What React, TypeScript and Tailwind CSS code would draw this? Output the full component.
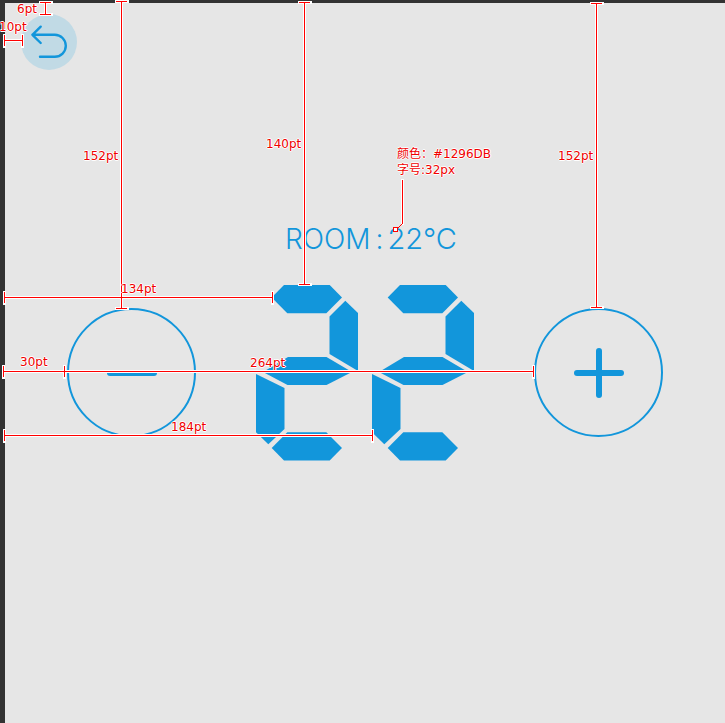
type Point = [number, number];

const SEGMENTS = [
  '28,0 73.7,0 86,12.5 70.3,28.3 31.3,28.3 15.7,12.5',
  '89.3,15.7 102,28 102,86 73.5,69 73.5,31.5',
  '32,72 70.5,72 96,87 70.5,100 31.5,100 7,87',
  '0,89 28.5,103 28.5,144 12.3,159.3 0,147.3',
  '31.3,147.3 70.3,147.3 86,163 73.7,175.5 28,175.5 15.7,163',
];

function DigitTwo() {
  return (
    <svg className="h-[175px] w-[102px] overflow-visible fill-[#1296db]" viewBox="0 0 102 175" aria-hidden="true">
      {SEGMENTS.map((points) => (
        <polygon key={points} points={points} />
      ))}
    </svg>
  );
}

function RoundButton({ label, plus }: { label: string; plus?: boolean }) {
  return (
    <button
      type="button"
      aria-label={label}
      className="flex size-[129px] shrink-0 items-center justify-center rounded-full border-2 border-[#1296db]"
    >
      <svg
        className="size-[50px] stroke-[#1296db]"
        viewBox="0 0 50 50"
        strokeWidth="6"
        strokeLinecap="round"
        aria-hidden="true"
      >
        <path d="M3 25H47" />
        {plus && <path d="M25 3V47" />}
      </svg>
    </button>
  );
}

// Each measure runs between two points and carries an end cap at both.
const MEASURES: [Point, Point][] = [
  [[121, 1], [121, 308]],
  [[304, 2], [304, 284]],
  [[596, 3], [596, 307]],
  [[45, 2], [45, 14]],
  [[4, 40], [22, 40]],
  [[4, 297], [272, 297]],
  [[3, 371], [533, 371]],
  [[4, 435], [372, 435]],
];

function measurePath([[x1, y1], [x2, y2]]: [Point, Point]) {
  return x1 === x2
    ? `M${x1 - 5.5} ${y1}h11M${x1 - 5.5} ${y2}h11M${x1} ${y1}V${y2}`
    : `M${x1} ${y1 - 5.5}v11M${x2} ${y1 - 5.5}v11M${x1} ${y1}H${x2}`;
}

const LINES = MEASURES.map(measurePath).join('') + 'M64 365.5v11M402 179.5V223';

const NOTES = [
  { text: '6pt', place: 'left-[17px] top-[1px]' },
  { text: '10pt', place: 'left-[-1px] top-[19px]' },
  { text: '152pt', place: 'left-[83px] top-[148px]' },
  { text: '140pt', place: 'left-[266px] top-[136px]' },
  { text: '152pt', place: 'left-[558px] top-[148px]' },
  { text: '134pt', place: 'left-[121px] top-[281px]' },
  { text: '30pt', place: 'left-[20px] top-[354px]' },
  { text: '264pt', place: 'left-[250px] top-[355px]' },
  { text: '184pt', place: 'left-[171px] top-[419px]' },
  { text: '颜色：#1296DB\n字号:32px', place: 'left-[397px] top-[146px]' },
];

function Annotations() {
  return (
    <div className="pointer-events-none absolute inset-0 overflow-hidden">
      <svg className="absolute inset-0 size-full" fill="none">
        <path
          d={LINES}
          transform="translate(0.5 0.5)"
          className="stroke-white"
          strokeWidth="3"
          strokeLinecap="square"
          shapeRendering="crispEdges"
        />
        <path
          d={LINES}
          transform="translate(0.5 0.5)"
          className="stroke-[#ff0000]"
          strokeWidth="1"
          shapeRendering="crispEdges"
        />
        <path d="M402.5 223.5L397.5 228.5" className="stroke-[#ff0000]" strokeWidth="1" />
        <rect
          x="393.5"
          y="227.5"
          width="4"
          height="4"
          className="fill-white stroke-[#ff0000]"
          shapeRendering="crispEdges"
        />
      </svg>
      {NOTES.map(({ text, place }) => (
        <p
          key={place}
          className={`absolute whitespace-pre font-['DejaVu_Sans','Noto_Sans_CJK_SC',sans-serif] text-[12px] leading-[16px] text-[#f00000] [text-shadow:1px_0_#fff,-1px_0_#fff,0_1px_#fff,0_-1px_#fff] ${place}`}
        >
          {text}
        </p>
      ))}
    </div>
  );
}

export default function App() {
  return (
    <div className="relative min-h-screen border-l-[5px] border-t-[3px] border-[#333333] bg-[#e6e6e6]">
      <main>
        <header className="pl-[16px] pt-[11px]">
          <button
            type="button"
            aria-label="Back"
            className="flex size-[56px] items-center justify-center rounded-full bg-[#c1dae5]"
          >
            <svg
              className="size-[40px] stroke-[#1296db]"
              viewBox="0 0 40 40"
              fill="none"
              strokeWidth="2.4"
              strokeLinecap="round"
              strokeLinejoin="round"
              aria-hidden="true"
            >
              <path d="M11.7 4.7L3.4 12.8L11.7 21M3.4 12.8H25.8A11 11 0 0 1 25.8 34.8H11" />
            </svg>
          </button>
        </header>

        <p className="mt-[153px] flex h-[32px] items-center justify-center pl-[12px] font-[Inter,sans-serif] font-light text-[#1296db]">
          <span className="text-[28px] leading-[32px]">ROOM</span>
          <span className="ml-[5px] text-[28px] leading-[32px]">:</span>
          <span className="ml-[4px] text-[29px] leading-[32px]">22°C</span>
        </p>

        <section className="mt-[30px] flex items-center justify-between px-[62px]">
          <RoundButton label="Lower the temperature" />
          <div role="img" aria-label="22" className="flex gap-[14px]">
            <DigitTwo />
            <DigitTwo />
          </div>
          <RoundButton label="Raise the temperature" plus />
        </section>
      </main>
      <div className="pointer-events-none absolute -left-[5px] -top-[3px] bottom-0 right-0">
        <Annotations />
      </div>
    </div>
  );
}
